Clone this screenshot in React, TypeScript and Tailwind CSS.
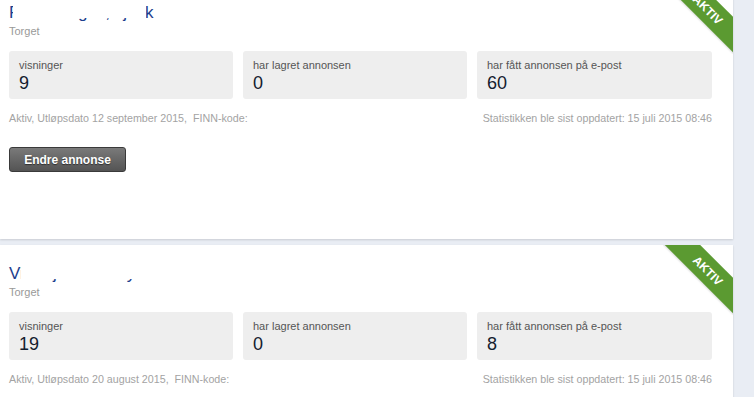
const ads = [
  {
    title: "Frakk selges, sjekk",
    mask: "left-[4px] right-[8px]",
    sted: "Torget",
    stats: ["9", "0", "60"],
    utlop: "12 september 2015",
  },
  {
    title: "Vinterjakke Helly Hansen str 152 lilla",
    mask: "left-[12px] -right-[4px]",
    sted: "Torget",
    stats: ["19", "0", "8"],
    utlop: "20 august 2015",
  },
];

const labels = ["visninger", "har lagret annonsen", "har fått annonsen på e-post"];

const Ribbon = () => (
  <div className="absolute top-0 right-0 w-[70px] h-[70px] overflow-hidden">
    <div className="absolute left-[-15px] top-[13px] w-[120px] h-[25px] rotate-45 bg-[#5b9a31] flex items-center justify-center text-white text-[12px] font-bold shadow-[0_1px_2px_rgba(0,0,0,0.15)]">
      AKTIV
    </div>
  </div>
);

const AdCard = ({ ad, first }: { ad: (typeof ads)[number]; first?: boolean }) => (
  <div className={`relative bg-white w-[733px] h-[255px] pl-[9px] pr-[21px] pt-[17px] shadow-[0_1px_2px_rgba(0,0,0,0.14)] ${first ? "-mt-[16px]" : "mt-[6px]"}`}>
    <Ribbon />
    <div className="relative inline-block text-[17px] leading-[22px] text-[#1d3e8d]">
      {ad.title}
      <div className={`absolute top-0 bottom-[6px] bg-white ${ad.mask}`} />
    </div>
    <div className="text-[11px] leading-[13px] text-[#999]">{ad.sted}</div>
    <div className="mt-[13px] grid grid-cols-[224px_224px_1fr] gap-[10px]">
      {labels.map((label, i) => (
        <div key={i} className="h-[48px] bg-[#eeeeee] rounded-[3px] px-[10px] pt-[8px]">
          <div className="text-[11px] leading-[13px] text-[#555]">{label}</div>
          <div className="text-[18px] leading-[22px] text-[#14202e]">{ad.stats[i]}</div>
        </div>
      ))}
    </div>
    <div className="mt-[13px] flex justify-between text-[10.7px] leading-[13px] text-[#a3a3a3]">
      <span>Aktiv, Utløpsdato {ad.utlop},&nbsp; FINN-kode:</span>
      <span>Statistikken ble sist oppdatert: 15 juli 2015 08:46</span>
    </div>
    <button className="mt-[22px] w-[117px] h-[25px] rounded-[3px] border border-[#3a3a3a] bg-gradient-to-b from-[#7a7a7a] to-[#545454] text-white text-[12px] font-bold [text-shadow:0_1px_1px_rgba(0,0,0,0.5)]">
      Endre annonse
    </button>
  </div>
);

export default function App() {
  return (
    <div className="w-[754px] h-[397px] overflow-hidden bg-[#e9edf4] font-['Liberation_Sans',Arial,sans-serif]">
      <AdCard ad={ads[0]} first />
      <AdCard ad={ads[1]} />
    </div>
  );
}
